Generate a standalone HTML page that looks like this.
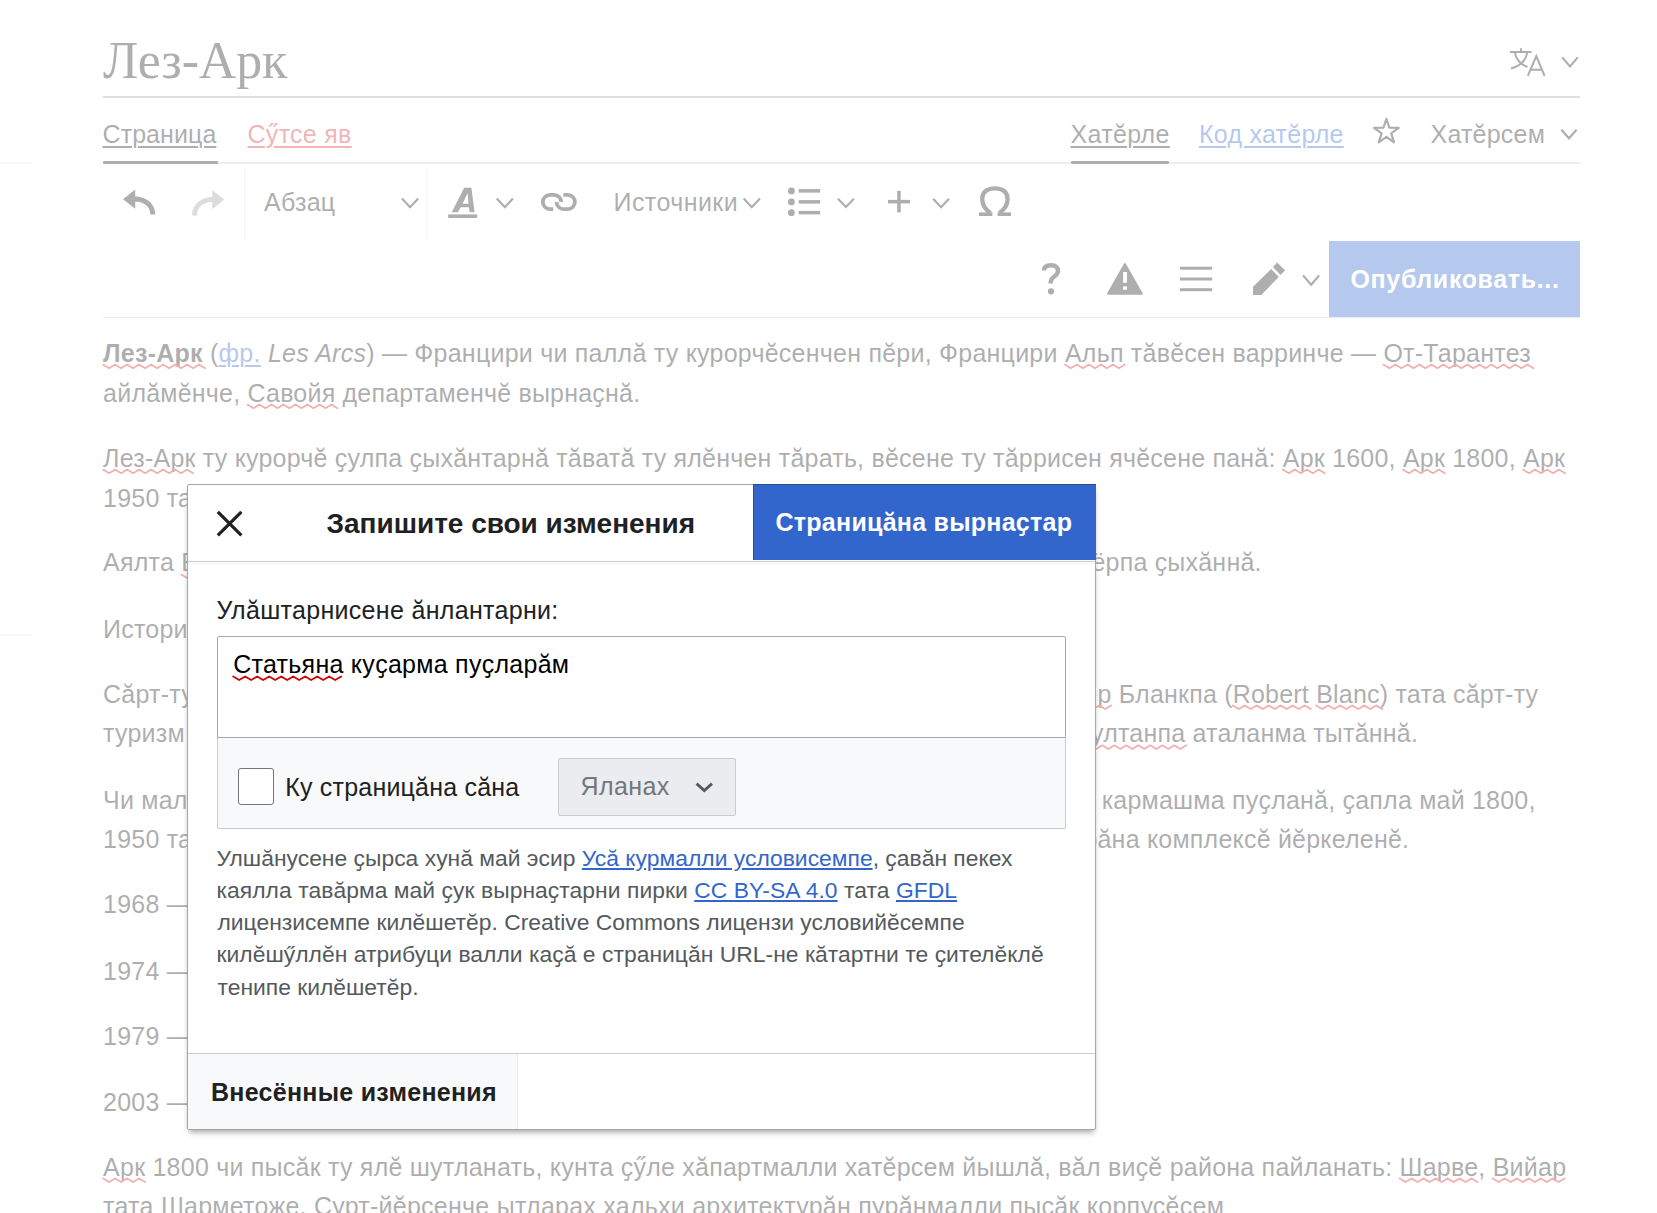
<!DOCTYPE html>
<html><head><meta charset="utf-8"><title>Лез-Арк</title><style>
html,body{margin:0;padding:0;}
body{width:1657px;height:1213px;overflow:hidden;background:#fff;position:relative;font-family:'Liberation Sans',sans-serif;}
.t{position:absolute;white-space:nowrap;}
.t u{text-decoration:underline;text-underline-offset:3.2px;text-decoration-thickness:2px;}
.t a{color:#3366cc;text-decoration:underline;}
.abbr{color:#3366cc;text-decoration:underline;text-underline-offset:3.2px;text-decoration-thickness:2px;}
.r{position:absolute;}
.ic{position:absolute;left:0;top:0;}
#ov{position:absolute;left:0;top:0;width:1657px;height:1213px;background:rgba(255,255,255,0.64);}
#dlg{position:absolute;left:187px;top:484px;width:907px;height:644px;background:#fff;border:1px solid #a4a6a9;border-radius:2px;box-shadow:0 4px 6px -2px rgba(0,0,0,0.38);}
</style></head>
<body>
<div id="page">

<div class="r" style="left:103px;top:96px;width:1477px;height:2px;background:#a2a9b1"></div>
<div class="r" style="left:0;top:162px;width:32px;height:1.5px;background:#eaecf0"></div>
<div class="r" style="left:0;top:634px;width:32px;height:1.5px;background:#eaecf0"></div>
<div class="r" style="left:103px;top:162px;width:1478px;height:2px;background:#c8ccd1"></div>
<div class="r" style="left:103px;top:161px;width:115px;height:3.2px;background:#202122;border-radius:1px"></div>
<div class="r" style="left:1071px;top:161px;width:98px;height:3.2px;background:#202122;border-radius:1px"></div>
<div class="r" style="left:244.3px;top:168px;width:1.5px;height:72px;background:#eaecf0"></div>
<div class="r" style="left:426.7px;top:168px;width:1.5px;height:72px;background:#eaecf0"></div>
<div class="r" style="left:103px;top:316.5px;width:1477px;height:1.8px;background:#c8ccd1"></div>
<div class="r" style="left:1329px;top:241px;width:251px;height:76px;background:#3366cc"></div>

<svg class="ic" width="1657" height="1213" viewBox="0 0 1657 1213"><g fill="none" stroke="#202122" stroke-width="2"><path d="M1521,48.3 V51.6"/><path d="M1509.9,52 H1531.5"/><path d="M1514.8,52.5 C1516.5,60 1520,64.5 1527.5,67"/><path d="M1527.3,52.5 C1525.5,61 1521,65.5 1511,68.5"/><path d="M1527.8,75.8 L1536.3,56 L1544.6,75.8 M1531,69.8 H1541.5"/></g><polyline points="1562.17,57.37 1570.00,66.43 1577.83,57.37" fill="none" stroke="#202122" stroke-width="2.2" stroke-linejoin="miter"/><polygon points="1386.40,118.80 1389.34,127.75 1398.76,127.78 1391.16,133.35 1394.04,142.32 1386.40,136.80 1378.76,142.32 1381.64,133.35 1374.04,127.78 1383.46,127.75" fill="none" stroke="#202122" stroke-width="2.2" stroke-linejoin="round"/><polyline points="1561.37,129.67 1568.95,138.23 1576.53,129.67" fill="none" stroke="#202122" stroke-width="2.2" stroke-linejoin="miter"/><path fill="#202122" d="M123,199.2 L135.2,189.6 L135.2,208.8 Z M134.5,196.6 C146,196.6 155.3,203.5 155.3,214.6 L150.4,214.6 C150.4,206 143.5,201.4 134.5,201.4 Z"/><path fill="#9e9e9e" d="M224.2,199.6 L212.2,190 L212.2,209.2 Z M212.9,197 C201.4,197 192.1,204.4 192.1,215.4 L197,215.4 C197,206.6 203.9,201.8 212.9,201.8 Z"/><polyline points="401.97,198.57 410.10,207.23 418.23,198.57" fill="none" stroke="#202122" stroke-width="2.2" stroke-linejoin="miter"/><path fill="#202122" fill-rule="evenodd" d="M451.8,212.3 L464.2,187.7 L471.4,187.7 L474.6,212.3 L469.6,212.3 L469.0,207.2 L460.6,207.2 L458.0,212.3 Z M462.4,203.8 L468.6,203.8 L467.6,193.2 Z"/><rect x="448.2" y="214.4" width="29" height="3.6" fill="#202122"/><polyline points="496.77,198.47 504.85,207.23 512.93,198.47" fill="none" stroke="#202122" stroke-width="2.2" stroke-linejoin="miter"/><g fill="none" stroke="#202122" stroke-width="3.8"><path d="M553.2,209.1 L549.9,209.1 A7.1,7.1 0 0 1 549.9,194.9 L554.1,194.9 A7.1,7.1 0 0 1 561.2,202"/><path d="M563.4,194.9 L567.8,194.9 A7.1,7.1 0 0 1 567.8,209.1 L563.6,209.1 A7.1,7.1 0 0 1 556.5,202"/></g><polyline points="743.67,198.47 751.80,207.23 759.93,198.47" fill="none" stroke="#202122" stroke-width="2.2" stroke-linejoin="miter"/><g fill="#202122"><circle cx="791.4" cy="190.9" r="3.4"/><circle cx="791.4" cy="201.9" r="3.4"/><circle cx="791.4" cy="212.7" r="3.4"/><rect x="798.7" y="189.1" width="21.5" height="3.5"/><rect x="798.7" y="200.1" width="21.5" height="3.5"/><rect x="798.7" y="210.9" width="21.5" height="3.5"/></g><polyline points="837.97,198.67 845.95,206.93 853.93,198.67" fill="none" stroke="#202122" stroke-width="2.2" stroke-linejoin="miter"/><g fill="#202122"><rect x="888" y="199.9" width="22" height="3.5"/><rect x="897.2" y="190.9" width="3.5" height="21.5"/></g><polyline points="933.17,198.77 941.05,207.23 948.93,198.77" fill="none" stroke="#202122" stroke-width="2.2" stroke-linejoin="miter"/><g fill="none" stroke="#202122" stroke-width="4.3"><path d="M990.5,213 C984,208.5 982.2,203 982.2,199 C982.2,191.5 988,188.3 994.9,188.3 C1001.8,188.3 1007.6,191.5 1007.6,199 C1007.6,203 1005.8,208.5 999.3,213"/></g><g fill="#202122"><rect x="979" y="212.4" width="13.4" height="3.6"/><rect x="997.6" y="212.4" width="13.4" height="3.6"/></g><g fill="none" stroke="#202122" stroke-width="4.4"><path d="M1043.9,270.5 C1043.9,266.5 1047,265.2 1051,265.2 C1055.5,265.2 1058,267.5 1058,270.8 C1058,274.5 1055,276 1053,277.6 C1051,279.2 1050.6,280.5 1050.6,283.6"/></g><circle cx="1051" cy="291.3" r="3.1" fill="#202122"/><path fill="#202122" stroke="#202122" stroke-width="2" stroke-linejoin="round" d="M1124.9,264 L1141.8,293.8 L1108,293.8 Z"/><rect x="1123.1" y="272" width="3.9" height="10.8" fill="#fff"/><rect x="1123.1" y="286.4" width="3.9" height="3.4" fill="#fff"/><g fill="#202122"><rect x="1179.9" y="266.7" width="32.3" height="3"/><rect x="1179.9" y="277.5" width="32.3" height="3"/><rect x="1179.9" y="288.2" width="32.3" height="3"/></g><g fill="#202122"><path d="M1277.1,262.6 L1285.1,270.6 L1280.4,274.9 L1273,266.9 Z"/><path d="M1271.2,269.1 L1278.8,277.1 L1261.3,295 L1253,295.1 L1253,286.8 Z"/></g><polyline points="1303.07,275.37 1311.15,284.83 1319.23,275.37" fill="none" stroke="#202122" stroke-width="2.2" stroke-linejoin="miter"/></svg>
<div class="t" id="t0" style="top:18.70px;font-family:'Liberation Serif', serif;font-size:52px;line-height:83px;font-weight:normal;color:#202122;letter-spacing:-0.167px;left:103.00px;">Лез-Арк</div>
<div class="t" id="t1" style="top:113.90px;font-family:'Liberation Sans', sans-serif;font-size:25px;line-height:40px;font-weight:normal;color:#202122;letter-spacing:0.071px;left:102.50px;"><u>Страница</u></div>
<div class="t" id="t2" style="top:113.90px;font-family:'Liberation Sans', sans-serif;font-size:25px;line-height:40px;font-weight:normal;color:#d73333;letter-spacing:0.286px;left:247.50px;"><u>Сӳтсе яв</u></div>
<div class="t" id="t3" style="top:113.90px;font-family:'Liberation Sans', sans-serif;font-size:25px;line-height:40px;font-weight:normal;color:#202122;letter-spacing:0.333px;left:1070.50px;"><u>Хатӗрле</u></div>
<div class="t" id="t4" style="top:113.90px;font-family:'Liberation Sans', sans-serif;font-size:25px;line-height:40px;font-weight:normal;color:#3366cc;letter-spacing:0.250px;left:1199.00px;"><u>Код хатӗрле</u></div>
<div class="t" id="t5" style="top:113.90px;font-family:'Liberation Sans', sans-serif;font-size:25px;line-height:40px;font-weight:normal;color:#202122;letter-spacing:0.214px;left:1430.50px;">Хатӗрсем</div>
<div class="t" id="t6" style="top:181.50px;font-family:'Liberation Sans', sans-serif;font-size:25px;line-height:40px;font-weight:normal;color:#202122;letter-spacing:0.250px;left:264.00px;">Абзац</div>
<div class="t" id="t7" style="top:181.50px;font-family:'Liberation Sans', sans-serif;font-size:25px;line-height:40px;font-weight:normal;color:#202122;letter-spacing:0.438px;left:613.50px;">Источники</div>
<div class="t" id="t8" style="top:258.50px;font-family:'Liberation Sans', sans-serif;font-size:25px;line-height:40px;font-weight:bold;color:#ffffff;letter-spacing:0.643px;left:1350.50px;">Опубликовать...</div>
<div class="t" id="t9" style="top:332.60px;font-family:'Liberation Sans', sans-serif;font-size:25px;line-height:40px;font-weight:normal;color:#202122;letter-spacing:0.239px;left:103.10px;"><b><span class="sq">Лез-Арк</span></b> (<span class="abbr">фр.</span> <i>Les Arcs</i>) — Францири чи паллӑ ту курорчӗсенчен пӗри, Францири <span class="sq">Альп</span> тӑвӗсен варринче — <span class="sq">От-Тарантез</span></div>
<div class="t" id="t10" style="top:372.60px;font-family:'Liberation Sans', sans-serif;font-size:25px;line-height:40px;font-weight:normal;color:#202122;letter-spacing:0.210px;left:103.10px;">айлӑмӗнче, <span class="sq">Савойя</span> департаменчӗ вырнаҫнӑ.</div>
<div class="t" id="t11" style="top:437.60px;font-family:'Liberation Sans', sans-serif;font-size:25px;line-height:40px;font-weight:normal;color:#202122;letter-spacing:0.214px;left:103.10px;"><span class="sq">Лез-Арк</span> ту курорчӗ ҫулпа ҫыхӑнтарнӑ тӑватӑ ту ялӗнчен тӑрать, вӗсене ту тӑррисен ячӗсене панӑ: <span class="sq">Арк</span> 1600, <span class="sq">Арк</span> 1800, <span class="sq">Арк</span></div>
<div class="t" id="t12" style="top:477.70px;font-family:'Liberation Sans', sans-serif;font-size:25px;line-height:40px;font-weight:normal;color:#202122;letter-spacing:0.210px;left:103.10px;">1950 тата Арк 2000.</div>
<div class="t" id="t13" style="top:542.40px;font-family:'Liberation Sans', sans-serif;font-size:25px;line-height:40px;font-weight:normal;color:#202122;letter-spacing:0.210px;left:103.10px;">Аялта <span class="sq">Бур-Сен-Морис</span> хулипе</div>
<div class="t" id="t14" style="top:542.40px;font-family:'Liberation Sans', sans-serif;font-size:25px;line-height:40px;font-weight:normal;color:#202122;letter-spacing:0.210px;right:395.32px;">Бур-Сен-Морис хулипе фуникулёрпа ҫыхӑннӑ.</div>
<div class="t" id="t15" style="top:608.50px;font-family:'Liberation Sans', sans-serif;font-size:25px;line-height:40px;font-weight:normal;color:#202122;letter-spacing:0.210px;left:103.10px;">Историре</div>
<div class="t" id="t16" style="top:673.50px;font-family:'Liberation Sans', sans-serif;font-size:25px;line-height:40px;font-weight:normal;color:#202122;letter-spacing:0.210px;left:103.10px;">Сӑрт-ту курорчӗн никӗсне хураканӗ</div>
<div class="t" id="t17" style="top:673.50px;font-family:'Liberation Sans', sans-serif;font-size:25px;line-height:40px;font-weight:normal;color:#202122;letter-spacing:0.210px;right:118.71px;">хураканӗ <span class="sq">Робер</span> Бланкпа (<span class="sq">Robert</span> <span class="sq">Blanc</span>) тата сӑрт-ту</div>
<div class="t" id="t18" style="top:713.30px;font-family:'Liberation Sans', sans-serif;font-size:25px;line-height:40px;font-weight:normal;color:#202122;letter-spacing:0.210px;left:103.10px;">туризм енӗпе</div>
<div class="t" id="t19" style="top:713.30px;font-family:'Liberation Sans', sans-serif;font-size:25px;line-height:40px;font-weight:normal;color:#202122;letter-spacing:0.210px;right:238.93px;">енӗпе 1960-мӗш <span class="sq">ҫултанпа</span> аталанма тытӑннӑ.</div>
<div class="t" id="t20" style="top:779.50px;font-family:'Liberation Sans', sans-serif;font-size:25px;line-height:40px;font-weight:normal;color:#202122;letter-spacing:0.210px;left:103.10px;">Чи малтан вӑрмана</div>
<div class="t" id="t21" style="top:779.50px;font-family:'Liberation Sans', sans-serif;font-size:25px;line-height:40px;font-weight:normal;color:#202122;letter-spacing:0.210px;right:121.40px;">вӑрмана кармашма пуҫланӑ, ҫапла май 1800,</div>
<div class="t" id="t22" style="top:819.30px;font-family:'Liberation Sans', sans-serif;font-size:25px;line-height:40px;font-weight:normal;color:#202122;letter-spacing:0.210px;left:103.10px;">1950 тата</div>
<div class="t" id="t23" style="top:819.30px;font-family:'Liberation Sans', sans-serif;font-size:25px;line-height:40px;font-weight:normal;color:#202122;letter-spacing:0.210px;right:247.77px;">тата Арк 2000 тӑрӑна комплексӗ йӗркеленӗ.</div>
<div class="t" id="t24" style="top:884.40px;font-family:'Liberation Sans', sans-serif;font-size:25px;line-height:40px;font-weight:normal;color:#202122;letter-spacing:0.210px;left:103.10px;">1968 — Арк 1600</div>
<div class="t" id="t25" style="top:950.50px;font-family:'Liberation Sans', sans-serif;font-size:25px;line-height:40px;font-weight:normal;color:#202122;letter-spacing:0.210px;left:103.10px;">1974 — Арк 1800</div>
<div class="t" id="t26" style="top:1015.50px;font-family:'Liberation Sans', sans-serif;font-size:25px;line-height:40px;font-weight:normal;color:#202122;letter-spacing:0.210px;left:103.10px;">1979 — Арк 2000</div>
<div class="t" id="t27" style="top:1081.50px;font-family:'Liberation Sans', sans-serif;font-size:25px;line-height:40px;font-weight:normal;color:#202122;letter-spacing:0.210px;left:103.10px;">2003 — Арк 1950</div>
<div class="t" id="t28" style="top:1146.50px;font-family:'Liberation Sans', sans-serif;font-size:25px;line-height:40px;font-weight:normal;color:#202122;letter-spacing:0.230px;left:103.10px;"><span class="sq">Арк</span> 1800 чи пысӑк ту ялӗ шутланать, кунта ҫӳле хӑпартмалли хатӗрсем йышлӑ, вӑл виҫӗ района пайланать: <span class="sq">Шарве</span>, <span class="sq">Вийар</span></div>
<div class="t" id="t29" style="top:1186.40px;font-family:'Liberation Sans', sans-serif;font-size:25px;line-height:40px;font-weight:normal;color:#202122;letter-spacing:0.250px;left:103.10px;">тата Шарметоже. Сурт-йӗрсенче ытларах хальхи архитектурӑн пурӑнмалли пысӑк корпусӗсем</div>
<svg class="ic" width="1657" height="1213" viewBox="0 0 1657 1213"><polyline points="103.09,364.60 109.09,368.20 115.09,364.60 121.09,368.20 127.09,364.60 133.09,368.20 139.09,364.60 145.09,368.20 151.09,364.60 157.09,368.20 163.09,364.60 169.09,368.20 175.09,364.60 181.09,368.20 187.09,364.60 193.09,368.20 199.09,364.60 205.09,368.20" fill="none" stroke="#dd2222" stroke-width="1.8" stroke-linejoin="round" stroke-linecap="round"/><polyline points="1064.91,364.60 1070.91,368.20 1076.91,364.60 1082.91,368.20 1088.91,364.60 1094.91,368.20 1100.91,364.60 1106.91,368.20 1112.91,364.60 1118.91,368.20 1124.91,364.60" fill="none" stroke="#dd2222" stroke-width="1.8" stroke-linejoin="round" stroke-linecap="round"/><polyline points="1383.42,364.60 1389.42,368.20 1395.42,364.60 1401.42,368.20 1407.42,364.60 1413.42,368.20 1419.42,364.60 1425.42,368.20 1431.42,364.60 1437.42,368.20 1443.42,364.60 1449.42,368.20 1455.42,364.60 1461.42,368.20 1467.42,364.60 1473.42,368.20 1479.42,364.60 1485.42,368.20 1491.42,364.60 1497.42,368.20 1503.42,364.60 1509.42,368.20 1515.42,364.60 1521.42,368.20 1527.42,364.60 1533.42,368.20" fill="none" stroke="#dd2222" stroke-width="1.8" stroke-linejoin="round" stroke-linecap="round"/><polyline points="247.48,404.60 253.48,408.20 259.48,404.60 265.48,408.20 271.48,404.60 277.48,408.20 283.48,404.60 289.48,408.20 295.48,404.60 301.48,408.20 307.48,404.60 313.48,408.20 319.48,404.60 325.48,408.20 331.48,404.60 337.48,408.20" fill="none" stroke="#dd2222" stroke-width="1.8" stroke-linejoin="round" stroke-linecap="round"/><polyline points="103.09,469.60 109.09,473.20 115.09,469.60 121.09,473.20 127.09,469.60 133.09,473.20 139.09,469.60 145.09,473.20 151.09,469.60 157.09,473.20 163.09,469.60 169.09,473.20 175.09,469.60 181.09,473.20 187.09,469.60 193.09,473.20" fill="none" stroke="#dd2222" stroke-width="1.8" stroke-linejoin="round" stroke-linecap="round"/><polyline points="1282.78,469.60 1288.78,473.20 1294.78,469.60 1300.78,473.20 1306.78,469.60 1312.78,473.20 1318.78,469.60 1324.78,473.20" fill="none" stroke="#dd2222" stroke-width="1.8" stroke-linejoin="round" stroke-linecap="round"/><polyline points="1402.91,469.60 1408.91,473.20 1414.91,469.60 1420.91,473.20 1426.91,469.60 1432.91,473.20 1438.91,469.60 1444.91,473.20" fill="none" stroke="#dd2222" stroke-width="1.8" stroke-linejoin="round" stroke-linecap="round"/><polyline points="1523.03,469.60 1529.03,473.20 1535.03,469.60 1541.03,473.20 1547.03,469.60 1553.03,473.20 1559.03,469.60 1565.03,473.20" fill="none" stroke="#dd2222" stroke-width="1.8" stroke-linejoin="round" stroke-linecap="round"/><polyline points="181.19,574.40 187.19,578.00 193.19,574.40 199.19,578.00 205.19,574.40 211.19,578.00 217.19,574.40 223.19,578.00 229.19,574.40 235.19,578.00 241.19,574.40 247.19,578.00 253.19,574.40 259.19,578.00 265.19,574.40 271.19,578.00 277.19,574.40 283.19,578.00 289.19,574.40 295.19,578.00 301.19,574.40 307.19,578.00 313.19,574.40 319.19,578.00 325.19,574.40 331.19,578.00 337.19,574.40 343.19,578.00 349.19,574.40 355.19,578.00 361.19,574.40" fill="none" stroke="#dd2222" stroke-width="1.8" stroke-linejoin="round" stroke-linecap="round"/><polyline points="1039.20,705.50 1045.20,709.10 1051.20,705.50 1057.20,709.10 1063.20,705.50 1069.20,709.10 1075.20,705.50 1081.20,709.10 1087.20,705.50 1093.20,709.10 1099.20,705.50 1105.20,709.10 1111.20,705.50" fill="none" stroke="#dd2222" stroke-width="1.8" stroke-linejoin="round" stroke-linecap="round"/><polyline points="1232.72,705.50 1238.72,709.10 1244.72,705.50 1250.72,709.10 1256.72,705.50 1262.72,709.10 1268.72,705.50 1274.72,709.10 1280.72,705.50 1286.72,709.10 1292.72,705.50 1298.72,709.10 1304.72,705.50 1310.72,709.10" fill="none" stroke="#dd2222" stroke-width="1.8" stroke-linejoin="round" stroke-linecap="round"/><polyline points="1316.17,705.50 1322.17,709.10 1328.17,705.50 1334.17,709.10 1340.17,705.50 1346.17,709.10 1352.17,705.50 1358.17,709.10 1364.17,705.50 1370.17,709.10 1376.17,705.50 1382.17,709.10" fill="none" stroke="#dd2222" stroke-width="1.8" stroke-linejoin="round" stroke-linecap="round"/><polyline points="1078.30,745.30 1084.30,748.90 1090.30,745.30 1096.30,748.90 1102.30,745.30 1108.30,748.90 1114.30,745.30 1120.30,748.90 1126.30,745.30 1132.30,748.90 1138.30,745.30 1144.30,748.90 1150.30,745.30 1156.30,748.90 1162.30,745.30 1168.30,748.90 1174.30,745.30 1180.30,748.90 1186.30,745.30" fill="none" stroke="#dd2222" stroke-width="1.8" stroke-linejoin="round" stroke-linecap="round"/><polyline points="103.09,1178.50 109.09,1182.10 115.09,1178.50 121.09,1182.10 127.09,1178.50 133.09,1182.10 139.09,1178.50 145.09,1182.10" fill="none" stroke="#dd2222" stroke-width="1.8" stroke-linejoin="round" stroke-linecap="round"/><polyline points="1399.58,1178.50 1405.58,1182.10 1411.58,1178.50 1417.58,1182.10 1423.58,1178.50 1429.58,1182.10 1435.58,1178.50 1441.58,1182.10 1447.58,1178.50 1453.58,1182.10 1459.58,1178.50 1465.58,1182.10 1471.58,1178.50 1477.58,1182.10" fill="none" stroke="#dd2222" stroke-width="1.8" stroke-linejoin="round" stroke-linecap="round"/><polyline points="1492.72,1178.50 1498.72,1182.10 1504.72,1178.50 1510.72,1182.10 1516.72,1178.50 1522.72,1182.10 1528.72,1178.50 1534.72,1182.10 1540.72,1178.50 1546.72,1182.10 1552.72,1178.50 1558.72,1182.10 1564.72,1178.50" fill="none" stroke="#dd2222" stroke-width="1.8" stroke-linejoin="round" stroke-linecap="round"/></svg>
</div>
<div id="ov"></div>
<div id="dlg"></div>

<div class="r" style="left:753px;top:484px;width:343px;height:76px;background:#3366cc;box-shadow:inset 1px 1px 0 #2a4b8d"></div>
<div class="r" style="left:188px;top:561px;width:907px;height:1px;background:#c8ccd1"></div>
<div class="r" style="left:188px;top:563px;width:907px;height:1px;background:#f4f4f4"></div>
<div class="r" style="left:217px;top:636px;width:847px;height:100px;border:1px solid #a2a9b1;border-radius:2px 2px 0 0;background:#fff"></div>
<div class="r" style="left:217px;top:738px;width:847px;height:90px;border:1px solid #c8ccd1;border-top:none;border-radius:0 0 2px 2px;background:#f8f9fa"></div>
<div class="r" style="left:238px;top:768px;width:34px;height:34.5px;border:1px solid #72777d;border-radius:3px;background:#fff"></div>
<div class="r" style="left:558px;top:758px;width:176px;height:55.5px;border:1px solid #c8ccd1;border-radius:2px;background:#eaecf0"></div>
<div class="r" style="left:188px;top:1052.5px;width:907px;height:1px;background:#c8ccd1"></div>
<div class="r" style="left:188px;top:1053.5px;width:329px;height:75.5px;background:#f8f9fa;border-right:1px solid #eaecf0"></div>

<svg class="ic" width="1657" height="1213" viewBox="0 0 1657 1213"><g stroke="#202122" stroke-width="3.2"><path d="M217.8,511.8 L241.4,535.4 M241.4,511.8 L217.8,535.4"/></g><polyline points="696.6,783.6 704.3,790.6 712,783.6" fill="none" stroke="#54595d" stroke-width="2.8"/></svg>
<div class="t" id="t30" style="top:501.00px;font-family:'Liberation Sans', sans-serif;font-size:28px;line-height:45px;font-weight:bold;color:#202122;letter-spacing:-0.023px;left:326.50px;">Запишите свои изменения</div>
<div class="t" id="t31" style="top:502.10px;font-family:'Liberation Sans', sans-serif;font-size:25px;line-height:40px;font-weight:bold;color:#ffffff;letter-spacing:0.263px;left:775.50px;">Страницӑна вырнаҫтар</div>
<div class="t" id="t32" style="top:589.60px;font-family:'Liberation Sans', sans-serif;font-size:25px;line-height:40px;font-weight:normal;color:#202122;letter-spacing:0.312px;left:216.50px;">Улӑштарнисене ӑнлантарни:</div>
<div class="t" id="t33" style="top:643.60px;font-family:'Liberation Sans', sans-serif;font-size:25px;line-height:40px;font-weight:normal;color:#000000;letter-spacing:0.271px;left:233.20px;"><span class="sq">Статьяна</span> куҫарма пуҫларӑм</div>
<div class="t" id="t34" style="top:766.80px;font-family:'Liberation Sans', sans-serif;font-size:25px;line-height:40px;font-weight:normal;color:#202122;letter-spacing:0.206px;left:285.20px;">Ку страницӑна сӑна</div>
<div class="t" id="t35" style="top:765.80px;font-family:'Liberation Sans', sans-serif;font-size:25px;line-height:40px;font-weight:normal;color:#72777d;letter-spacing:0.400px;left:580.50px;">Яланах</div>
<div class="t" id="t36" style="top:839.60px;font-family:'Liberation Sans', sans-serif;font-size:22.85px;line-height:37px;font-weight:normal;color:#54595d;letter-spacing:0.015px;left:216.50px;">Улшӑнусене ҫырса хунӑ май эсир <a>Усӑ курмалли условисемпе</a>, ҫавӑн пекех</div>
<div class="t" id="t37" style="top:871.90px;font-family:'Liberation Sans', sans-serif;font-size:22.85px;line-height:37px;font-weight:normal;color:#54595d;letter-spacing:0.056px;left:216.50px;">каялла тавӑрма май ҫук вырнаҫтарни пирки <a>CC BY-SA 4.0</a> тата <a>GFDL</a></div>
<div class="t" id="t38" style="top:904.10px;font-family:'Liberation Sans', sans-serif;font-size:22.85px;line-height:37px;font-weight:normal;color:#54595d;letter-spacing:0.016px;left:217.50px;">лицензисемпе килӗшетӗр. Creative Commons лицензи условийӗсемпе</div>
<div class="t" id="t39" style="top:936.40px;font-family:'Liberation Sans', sans-serif;font-size:22.85px;line-height:37px;font-weight:normal;color:#54595d;letter-spacing:0.036px;left:216.50px;">килӗшӳллӗн атрибуци валли каҫӑ е страницӑн URL-не кӑтартни те ҫителӗклӗ</div>
<div class="t" id="t40" style="top:968.60px;font-family:'Liberation Sans', sans-serif;font-size:22.85px;line-height:37px;font-weight:normal;color:#54595d;letter-spacing:0.000px;left:217.50px;">тенипе килӗшетӗр.</div>
<div class="t" id="t41" style="top:1071.70px;font-family:'Liberation Sans', sans-serif;font-size:25px;line-height:40px;font-weight:bold;color:#202122;letter-spacing:0.278px;left:211.00px;">Внесённые изменения</div>
<svg class="ic" width="1657" height="1213" viewBox="0 0 1657 1213"><polyline points="233.19,676.50 239.19,680.00 245.19,676.50 251.19,680.00 257.19,676.50 263.19,680.00 269.19,676.50 275.19,680.00 281.19,676.50 287.19,680.00 293.19,676.50 299.19,680.00 305.19,676.50 311.19,680.00 317.19,676.50 323.19,680.00 329.19,676.50 335.19,680.00 341.19,676.50" fill="none" stroke="#d00000" stroke-width="1.8" stroke-linejoin="round" stroke-linecap="round"/></svg>
</body></html>
